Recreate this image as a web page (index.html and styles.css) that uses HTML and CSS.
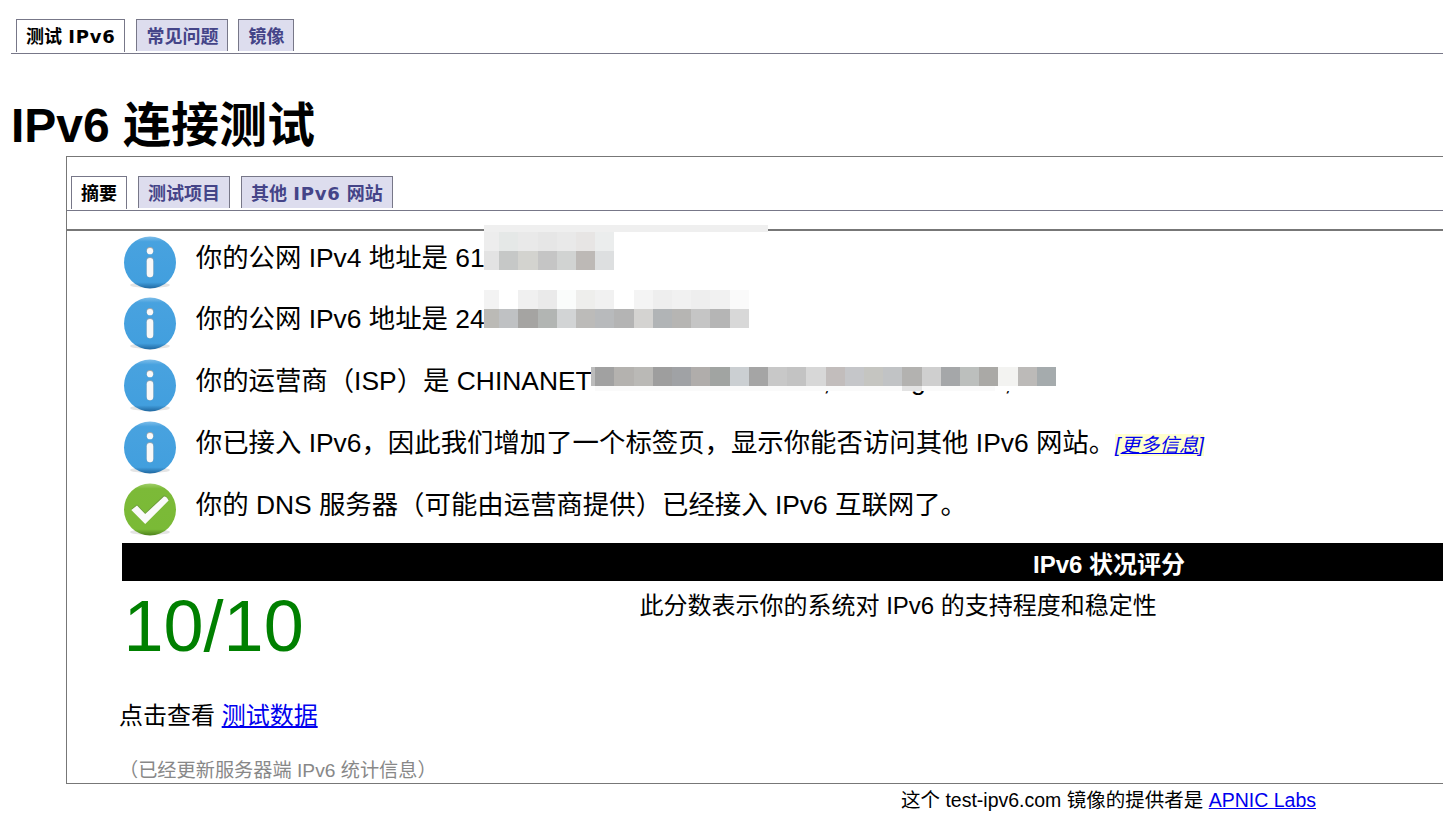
FILE: index.html
```html
<!DOCTYPE html>
<html lang="zh-CN">
<head>
  <meta charset="UTF-8">
  <title>IPv6 连接测试</title>
  <link rel="stylesheet" href="styles.css">
</head>
<body>
  <svg class="defs" width="0" height="0">
    <defs>
      <linearGradient id="blue" x1="0" y1="0" x2="0" y2="1">
        <stop offset="0" stop-color="#7dbde9"/>
        <stop offset="0.1" stop-color="#48a2df"/>
        <stop offset="0.88" stop-color="#429fde"/>
        <stop offset="1" stop-color="#20679f"/>
      </linearGradient>
      <linearGradient id="green" x1="0" y1="0" x2="0" y2="1">
        <stop offset="0" stop-color="#a2cf6c"/>
        <stop offset="0.1" stop-color="#7cba38"/>
        <stop offset="0.88" stop-color="#7aba36"/>
        <stop offset="1" stop-color="#4d811c"/>
      </linearGradient>
      <symbol id="info" viewBox="0 0 54 54">
        <ellipse cx="27" cy="49" rx="20" ry="3" fill="#e4e4e4"/>
        <circle cx="27" cy="26.5" r="26" fill="url(#blue)"/>
        <circle cx="27" cy="14.6" r="3.5" fill="#aaa"/>
        <circle cx="27" cy="15.2" r="3.1" fill="#fafafa"/>
        <rect x="23.4" y="21" width="7.2" height="20.4" rx="3.6" fill="#8aa4b8"/>
        <rect x="23.8" y="22" width="6.4" height="19.2" rx="3.2" fill="#f8f8f8"/>
      </symbol>
      <symbol id="check" viewBox="0 0 54 54">
        <ellipse cx="27" cy="49" rx="20" ry="3" fill="#e4e4e4"/>
        <circle cx="27" cy="26.5" r="26" fill="url(#green)"/>
        <path d="M8.3 26 L14 21.4 L22.2 30 L40.6 12.6 Q43 12 45.6 16.4 L22.4 39.4 Z" fill="#6c9a3c"/>
        <path d="M8.3 27 L14 22.6 L22.2 31 L41 13.6 Q43.6 13.2 45.6 17.6 L22.2 41 Z" fill="#fafafa"/>
      </symbol>
    </defs>
  </svg>

  <ul class="tabs">
    <li class="active">测试 <span>IPv6</span></li>
    <li>常见问题</li>
    <li>镜像</li>
  </ul>

  <h1>IPv6 连接测试</h1>

  <div class="panel">
    <ul class="tabs tabs-inner">
      <li class="active">摘要</li>
      <li>测试项目</li>
      <li>其他 <span>IPv6</span> 网站</li>
    </ul>

    <div class="content">
      <div class="result result-first">
        <svg class="icon"><use href="#info"/></svg>
        <p>你的公网 IPv4 地址是 61</p>
        <svg class="mask mask-v4" width="284" height="45" shape-rendering="crispEdges">
          <path fill="#efefef" d="M0 0h284v7H0z"/>
          <path fill="#ededed" d="M0 7h15v19H0z"/>
          <path fill="#e5e8e7" d="M15 7h19v19H15z"/>
          <path fill="#e9e9e9" d="M34 7h20v19H34z"/>
          <path fill="#e6e6e6" d="M54 7h19v19H54z"/>
          <path fill="#e9e9e9" d="M73 7h19v19H73z"/>
          <path fill="#e7e5e4" d="M92 7h19v19H92z"/>
          <path fill="#ebeded" d="M111 7h19v19h-19z"/>
          <path fill="#e3e3e3" d="M0 26h15v19H0z"/>
          <path fill="#c6c8c7" d="M15 26h19v19H15z"/>
          <path fill="#d3d3cf" d="M34 26h20v19H34z"/>
          <path fill="#c5c5c5" d="M54 26h19v19H54z"/>
          <path fill="#d1d3d2" d="M73 26h19v19H73z"/>
          <path fill="#bdb9b6" d="M92 26h19v19H92z"/>
          <path fill="#dddfe0" d="M111 26h19v19h-19z"/>
        </svg>
      </div>
      <div class="result">
        <svg class="icon"><use href="#info"/></svg>
        <p>你的公网 IPv6 地址是 24</p>
        <svg class="mask mask-v6" width="265" height="38" shape-rendering="crispEdges">
          <path fill="#f3f3f3" d="M0 0h15v19H0z"/>
          <path fill="#f0f0f0" d="M34 0h20v19H34z"/>
          <path fill="#eaeaea" d="M54 0h19v19H54z"/>
          <path fill="#fafcfb" d="M73 0h19v19H73z"/>
          <path fill="#eeeeec" d="M92 0h19v19H92z"/>
          <path fill="#f1f1f1" d="M111 0h19v19h-19z"/>
          <path fill="#f4f4f4" d="M150 0h19v19h-19z"/>
          <path fill="#eeeeee" d="M169 0h19v19h-19z"/>
          <path fill="#f1f1f1" d="M188 0h19v19h-19z"/>
          <path fill="#eeeeee" d="M207 0h19v19h-19z"/>
          <path fill="#f1f1f1" d="M226 0h20v19h-20z"/>
          <path fill="#fafafa" d="M246 0h19v19h-19z"/>
          <path fill="#bbbab6" d="M0 19h15v19H0z"/>
          <path fill="#bfc1c3" d="M15 19h19v19H15z"/>
          <path fill="#a5a4a2" d="M34 19h20v19H34z"/>
          <path fill="#b2b5b3" d="M54 19h19v19H54z"/>
          <path fill="#d2d4d5" d="M73 19h19v19H73z"/>
          <path fill="#bcbbb9" d="M92 19h19v19H92z"/>
          <path fill="#b8babc" d="M111 19h19v19h-19z"/>
          <path fill="#b4b4b4" d="M130 19h20v19h-20z"/>
          <path fill="#d4d3d1" d="M150 19h19v19h-19z"/>
          <path fill="#b1b4b6" d="M169 19h19v19h-19z"/>
          <path fill="#b6b5b3" d="M188 19h19v19h-19z"/>
          <path fill="#c5c5c5" d="M207 19h19v19h-19z"/>
          <path fill="#b5b5b5" d="M226 19h20v19h-20z"/>
          <path fill="#d8d8d8" d="M246 19h19v19h-19z"/>
        </svg>
      </div>
      <div class="result">
        <svg class="icon"><use href="#info"/></svg>
        <p>你的运营商（ISP）是 CHINANET</p>
        <span class="rest rest-1">,</span>
        <span class="rest rest-2">g</span>
        <span class="rest rest-3">,</span>
        <svg class="mask mask-isp" width="465" height="24" shape-rendering="crispEdges">
          <path fill="#fff" d="M4 0h461v24H4z"/>
          <path fill="#fafafa" d="M4 19h400v5H4z"/>
          <path fill="#e3e3e3" d="M311 19h20v5h-20z"/>
          <path fill="#bcbcbc" d="M0 0h4v19H0z"/>
          <path fill="#a1a1a1" d="M4 0h19v19H4z"/>
          <path fill="#b4b2af" d="M23 0h20v19H23z"/>
          <path fill="#bab9b6" d="M43 0h19v19H43z"/>
          <path fill="#9e9e9e" d="M62 0h19v19H62z"/>
          <path fill="#a0a2a5" d="M81 0h19v19H81z"/>
          <path fill="#b0adab" d="M100 0h19v19h-19z"/>
          <path fill="#a1a4a2" d="M119 0h20v19h-20z"/>
          <path fill="#cbcfd2" d="M139 0h19v19h-19z"/>
          <path fill="#a5a5a5" d="M158 0h19v19h-19z"/>
          <path fill="#c8c8c8" d="M177 0h19v19h-19z"/>
          <path fill="#c3c3c3" d="M196 0h19v19h-19z"/>
          <path fill="#d7d7d7" d="M215 0h20v19h-20z"/>
          <path fill="#c2bdbc" d="M235 0h19v19h-19z"/>
          <path fill="#c5c6c9" d="M254 0h19v19h-19z"/>
          <path fill="#c5c5c1" d="M273 0h19v19h-19z"/>
          <path fill="#c1c3c5" d="M292 0h19v19h-19z"/>
          <path fill="#b3b2b0" d="M311 0h20v19h-20z"/>
          <path fill="#cfcfcf" d="M331 0h19v19h-19z"/>
          <path fill="#a5a7a9" d="M350 0h19v19h-19z"/>
          <path fill="#bcbfbd" d="M369 0h19v19h-19z"/>
          <path fill="#aaa9a6" d="M388 0h19v19h-19z"/>
          <path fill="#f3f3f1" d="M407 0h20v19h-20z"/>
          <path fill="#bcbab8" d="M427 0h19v19h-19z"/>
          <path fill="#a5abad" d="M446 0h19v19h-19z"/>
        </svg>
      </div>
      <div class="result">
        <svg class="icon"><use href="#info"/></svg>
        <p>你已接入 IPv6，因此我们增加了一个标签页，显示你能否访问其他 IPv6 网站。<i class="more">[<a href="#">更多信息</a>]</i></p>
      </div>
      <div class="result">
        <svg class="icon"><use href="#check"/></svg>
        <p>你的 DNS 服务器（可能由运营商提供）已经接入 IPv6 互联网了。</p>
      </div>

      <div class="score-title">IPv6 状况评分</div>
      <div class="score-row">
        <div class="score">10/10</div>
        <div class="score-text">此分数表示你的系统对 IPv6 的支持程度和稳定性</div>
      </div>

      <p class="data">点击查看 <a href="#">测试数据</a></p>
      <p class="note">（已经更新服务器端 IPv6 统计信息）</p>
    </div>
  </div>

  <div class="footer">这个 test-ipv6.com 镜像的提供者是 <a href="#">APNIC Labs</a></div>
</body>
</html>
```
FILE: styles.css
```css
html {
  overflow: hidden;
}

body {
  width: 2195px;
  margin: 0 0 0 11px;
  padding-top: 19px;
  background-color: #fff;
  color: #000;
  font-family: "Liberation Sans", "Noto Sans CJK SC", sans-serif;
  font-size: 24px;
}

p {
  margin: 0;
}

a {
  color: #0000ee;
}

.defs {
  position: absolute;
}

.tabs {
  display: flex;
  gap: 10px;
  height: 34px;
  margin: 0;
  padding: 0 0 0 5px;
  border-bottom: 1px solid #777788;
  list-style: none;
  font: bold 18px/34px "DejaVu Sans", "Noto Sans CJK SC", sans-serif;
}

.tabs li {
  box-sizing: border-box;
  height: 32px;
  padding: 0 9px;
  border: 1px solid #777788;
  border-bottom: none;
  background-color: #ddddee;
  color: #444488;
}

.tabs span {
  letter-spacing: 0.75px;
}

.tabs .active {
  height: 33px;
  margin-right: 1px;
  background-color: #fff;
  color: #000;
}

h1 {
  height: 102px;
  margin: 0;
  font-size: 48px;
  line-height: 144px;
}

.panel {
  box-sizing: border-box;
  height: 628px;
  margin: 0 55px;
  padding-top: 19px;
  border: 1px solid #777;
}

.tabs-inner {
  gap: 11px;
  padding-left: 4px;
}

.tabs-inner .active {
  margin-right: 0;
}

.content {
  margin-top: 18px;
  padding: 0 54px 0 55px;
  border-top: 2px solid #777;
}

.result {
  display: flex;
  position: relative;
  height: 62px;
  font-size: 26.4px;
}

.result-first {
  height: 61px;
}

.result p {
  margin-left: 19.2px;
  line-height: 54px;
  white-space: nowrap;
}

.icon {
  flex: none;
  width: 54px;
  height: 54px;
  margin-top: 4.5px;
  margin-left: 0.6px;
}

.mask {
  position: absolute;
}

.mask-v4 {
  top: -6px;
  left: 362px;
}

.mask-v6 {
  top: -2px;
  left: 362px;
}

.mask-isp {
  top: 13px;
  left: 469px;
}

.rest {
  position: absolute;
  top: 12px;
  line-height: 30px;
}

.rest-1 {
  left: 701px;
}

.rest-2 {
  left: 789px;
}

.rest-3 {
  left: 882px;
}

.more {
  background-color: #ffffcc;
  color: #0000ee;
  font-size: 19.5px;
}

.score-title {
  height: 38px;
  margin-top: 3px;
  background-color: #000;
  color: #fff;
  font-weight: bold;
  line-height: 44px;
  text-align: center;
}

.score-row {
  display: flex;
  height: 112px;
}

.score {
  width: 516px;
  padding-left: 1.5px;
  color: green;
  font-size: 72px;
  line-height: 90px;
}

.score-text {
  line-height: 50px;
}

.data {
  margin-left: -3px;
  line-height: 46px;
}

.note {
  margin-top: 14px;
  margin-left: -3px;
  color: #888;
  font-size: 19.2px;
  line-height: 36px;
}

.footer {
  font-size: 19.5px;
  line-height: 32px;
  text-align: center;
}
```
